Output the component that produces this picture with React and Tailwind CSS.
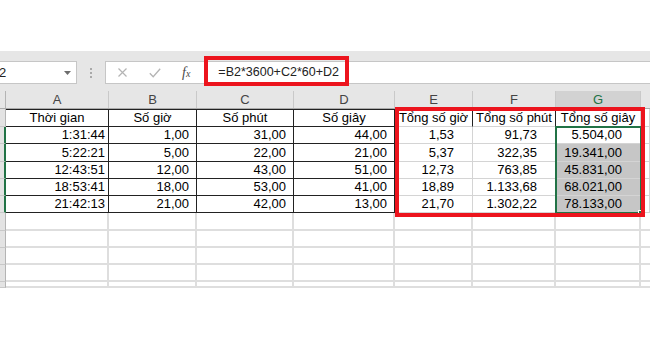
const cols = [
  { key: 'A', w: 'w-[103px]', pad: 'pr-[3px]' },
  { key: 'B', w: 'w-[88px]', pad: 'pr-[7px]' },
  { key: 'C', w: 'w-[97px]', pad: 'pr-[7px]' },
  { key: 'D', w: 'w-[101px]', pad: 'pr-[7px]' },
  { key: 'E', w: 'w-[78px]', pad: 'pr-[18px]' },
  { key: 'F', w: 'w-[83px]', pad: 'pr-[18px]' },
  { key: 'G', w: 'w-[85px]', pad: 'pr-[18px]' },
];

const titles = ['Thời gian', 'Số giờ', 'Số phút', 'Số giây', 'Tổng số giờ', 'Tổng số phút', 'Tổng số giây'];

const rows = [
  ['1:31:44', '1,00', '31,00', '44,00', '1,53', '91,73', '5.504,00'],
  ['5:22:21', '5,00', '22,00', '21,00', '5,37', '322,35', '19.341,00'],
  ['12:43:51', '12,00', '43,00', '51,00', '12,73', '763,85', '45.831,00'],
  ['18:53:41', '18,00', '53,00', '41,00', '18,89', '1.133,68', '68.021,00'],
  ['21:42:13', '21,00', '42,00', '13,00', '21,70', '1.302,22', '78.133,00'],
];

const rowHeights = ['h-[17px]', 'h-[18px]', 'h-[17px]', 'h-[17px]', 'h-[17px]'];
const emptyHeights = ['h-[18px]', 'h-[17px]', 'h-[17px]', 'h-[17px]', 'h-[6px]'];

function RowHead({ selected, h }) {
  return (
    <div
      className={`${h} w-[6px] shrink-0 bg-[#e3e3e3] border-b border-b-[#c8c8c8] ${
        selected ? 'border-r-2 border-r-[#217346]' : 'border-r border-r-[#b4b4b4]'
      }`}
    />
  );
}

function TitleRow() {
  return (
    <div className="flex h-[18px]">
      <RowHead h="h-[18px]" />
      {cols.map((c, i) => {
        const dark = i < 4;
        const sep = i < 6 ? 'border-r-[#222]' : 'border-r-[#d4d4d4]';
        return (
          <div
            key={c.key}
            className={`${c.w} shrink-0 flex items-center justify-center whitespace-nowrap border-r border-b ${sep} ${
              dark ? 'border-t border-t-[#222] border-b-[#222]' : 'border-b-[#d4d4d4]'
            }`}
          >
            {titles[i]}
          </div>
        );
      })}
      <div className="flex-1 border-r border-b border-[#d4d4d4]" />
    </div>
  );
}

function DataRow({ values, h, index }) {
  return (
    <div className={`flex ${h}`}>
      <RowHead selected h={h} />
      {cols.map((c, i) => {
        const dark = i < 4;
        const fill = i === 6 && index > 0 ? 'bg-[#c6c6c6]' : '';
        return (
          <div
            key={c.key}
            className={`${c.w} ${c.pad} ${fill} shrink-0 flex items-center justify-end whitespace-nowrap border-r border-b ${
              dark ? 'border-[#222]' : 'border-[#d4d4d4]'
            }`}
          >
            {values[i]}
          </div>
        );
      })}
      <div className="flex-1 border-r border-b border-[#d4d4d4]" />
    </div>
  );
}

function EmptyRow({ h }) {
  return (
    <div className={`flex ${h}`}>
      <RowHead h={h} />
      {cols.map((c) => (
        <div key={c.key} className={`${c.w} shrink-0 border-r-2 border-b-2 border-[#dedede]`} />
      ))}
      <div className="flex-1 border-b-2 border-[#dedede]" />
    </div>
  );
}

export default function App() {
  return (
    <div className="w-[650px] h-[340px] overflow-hidden bg-white text-black font-['Liberation_Sans',Arial,sans-serif]">
      <div className="h-[51px]" />

      {/* formula bar */}
      <div className="relative h-[40px] bg-[#e6e6e6] flex items-start pt-[10px]">
        <div className="w-[77px] h-[23px] shrink-0 bg-white border-y border-r border-[#c6c6c6] flex items-center text-[13px] text-[#222]">
          <span className="-ml-[1px]">2</span>
          <svg className="ml-auto mr-[5px]" width="7" height="4" viewBox="0 0 7 4">
            <path d="M0 0h7L3.5 4z" fill="#6d6d6d" />
          </svg>
        </div>
        <div className="w-[28px] h-[23px] flex flex-col items-center justify-center gap-[2px]">
          <span className="w-[2px] h-[2px] bg-[#a9a9a9]" />
          <span className="w-[2px] h-[2px] bg-[#a9a9a9]" />
          <span className="w-[2px] h-[2px] bg-[#a9a9a9]" />
        </div>
        <div className="flex-1 h-[23px] bg-white border-y border-l border-[#c6c6c6] flex items-center">
          <svg className="ml-[12px]" width="9" height="9" viewBox="0 0 9 9">
            <path d="M0.5 0.5l8 8M8.5 0.5l-8 8" stroke="#b4b4b4" strokeWidth="1.2" />
          </svg>
          <svg className="ml-[22px]" width="12" height="10" viewBox="0 0 12 10">
            <path d="M0.8 5.2l3.4 3.6L11.2 0.8" stroke="#b4b4b4" strokeWidth="1.3" fill="none" />
          </svg>
          <span className="ml-[21px] italic font-['Liberation_Serif',serif] text-[14px] text-[#4a4a4a] leading-none">
            f<span className="text-[10px]">x</span>
          </span>
          <span className="ml-[28px] text-[12.5px] text-[#222]">=B2*3600+C2*60+D2</span>
        </div>
        <div className="absolute left-[204px] top-[5px] w-[145px] h-[30px] border-4 border-[#ec141d]" />
      </div>

      {/* sheet */}
      <div className="relative text-[13px]">
        <div className="flex h-[18px] bg-[#e6e6e6] border-b border-[#ababab] text-[#444]">
          <div className="w-[6px] shrink-0 border-r border-[#b4b4b4]" />
          {cols.map((c) => (
            <div
              key={c.key}
              className={`${c.w} shrink-0 flex items-center justify-center border-r border-[#c9c9c9] ${
                c.key === 'G' ? 'bg-[#d2d2d2] text-[#217346]' : ''
              }`}
            >
              {c.key}
            </div>
          ))}
          <div className="flex-1" />
        </div>

        <TitleRow />
        {rows.map((r, i) => (
          <DataRow key={i} values={r} h={rowHeights[i]} index={i} />
        ))}
        {emptyHeights.map((h, i) => (
          <EmptyRow key={i} h={h} />
        ))}

        {/* selection G2:G6 */}
        <div className="absolute left-[555px] top-[35px] w-[87px] h-[88px] border-2 border-[#217346]">
          <div className="absolute -right-[4px] -bottom-[4px] w-[6px] h-[6px] bg-[#217346] border border-white" />
        </div>

        {/* annotation box */}
        <div className="absolute left-[395px] top-[16px] w-[250px] h-[110px] border-4 border-[#ec141d]" />
      </div>
    </div>
  );
}
